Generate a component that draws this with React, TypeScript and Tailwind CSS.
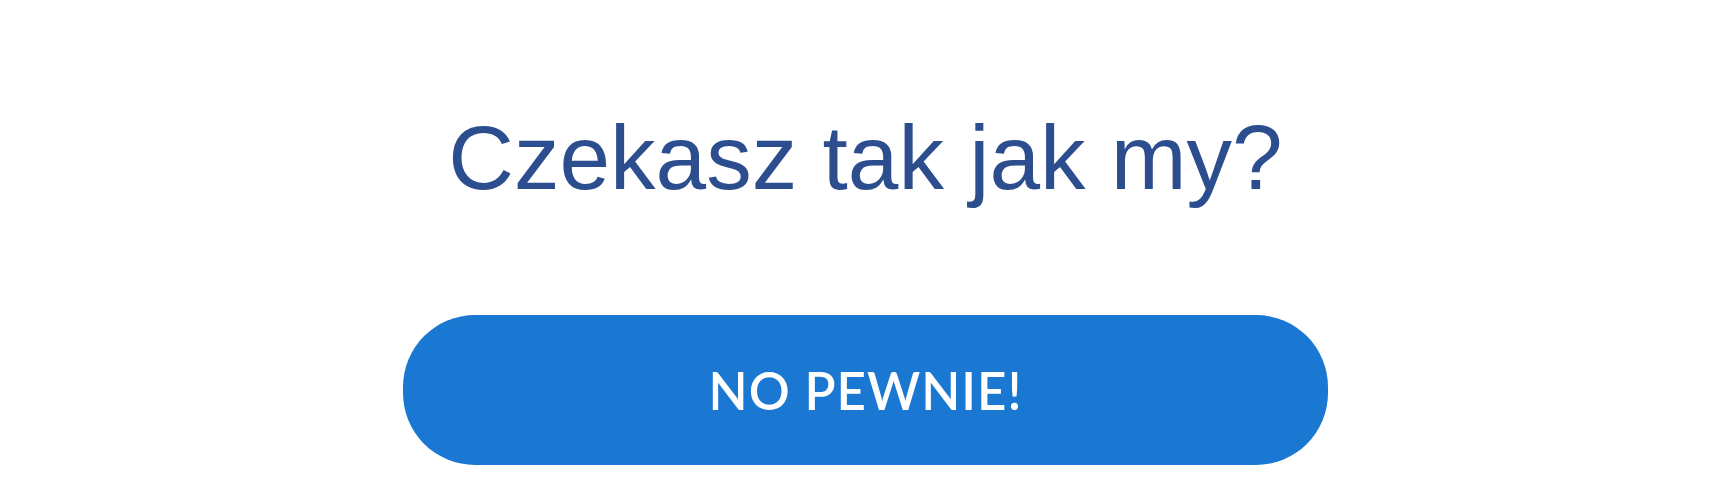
export default function App() {
  return (
    <div className="w-full h-[488px] bg-white flex flex-col items-center pt-[112px]">
      <h1 className="font-['Liberation_Sans',Arial,sans-serif] text-[91px] leading-none text-[#2c4e8e] whitespace-nowrap">
        Czekasz tak jak my?
      </h1>
      <button
        type="button"
        className="mt-[112px] w-[925px] h-[150px] rounded-[72px] bg-[#1b78d2] flex items-center justify-center text-white font-['Lato',Arial,sans-serif] font-semibold text-[51px] leading-none tracking-[1px]"
      >
        NO PEWNIE!
      </button>
    </div>
  );
}
